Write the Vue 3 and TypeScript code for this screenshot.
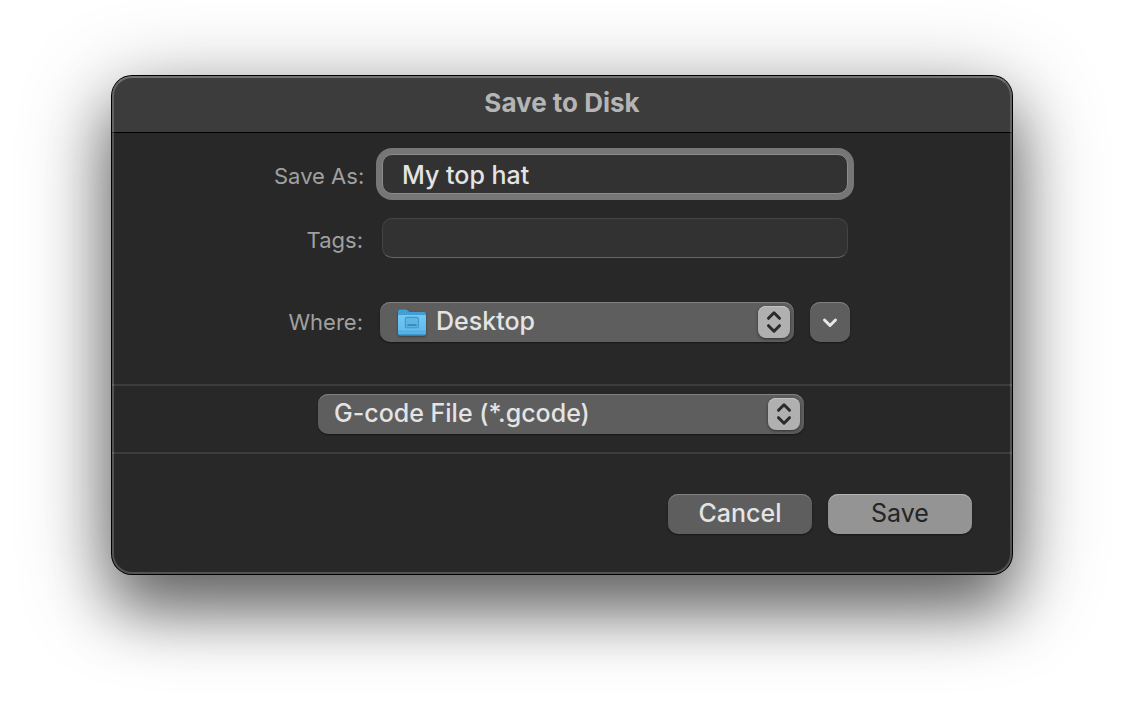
<script setup lang="ts">
import { ref } from 'vue'

const fileName = ref('My top hat')
const tags = ref('')
const location = ref('Desktop')
const format = ref('gcode')
</script>

<template>
  <main class="page">
    <form class="dialog" aria-labelledby="dialog-title" @submit.prevent>
      <header class="titlebar">
        <h1 id="dialog-title">Save to Disk</h1>
      </header>

      <div class="fields">
        <label class="label label-text" for="file-name">Save As:</label>
        <input id="file-name" v-model="fileName" class="text focused" type="text" />

        <label class="label label-text" for="tags">Tags:</label>
        <input id="tags" v-model="tags" class="text" type="text" />

        <label class="label label-where" for="location">Where:</label>
        <div class="where">
          <div class="popup popup-icon">
            <svg class="folder" viewBox="0 0 32 30" aria-hidden="true">
              <defs>
                <linearGradient id="folder-front" x1="0" y1="0" x2="0" y2="1">
                  <stop offset="0" stop-color="#74c8f3" />
                  <stop offset="0.75" stop-color="#61bbec" />
                  <stop offset="1" stop-color="#4fa9dd" />
                </linearGradient>
              </defs>
              <path d="M2 3.500Q2 1.500 4 1.500H9.500Q10.700 1.500 11.600 2.300L12.600 3.200Q13.300 3.900 14.400 3.900H28Q30 3.900 30 5.900V12H2Z" fill="#419fd6" />
              <path d="M2 7.800Q2 6.900 3 6.900H29Q30 6.900 30 7.800V25.500Q30 27.500 28 27.500H4Q2 27.500 2 25.500Z" fill="url(#folder-front)" />
              <path d="M2 23.300H30" stroke="#4ba4d8" stroke-width="0.800" />
              <path d="M2.500 26.900H29.500" stroke="#3689bd" stroke-width="1" />
              <rect x="9.400" y="9.400" width="13" height="10.400" rx="1.400" fill="#5eb5e4" stroke="#3f97cb" stroke-width="1.100" />
              <path d="M12 17.200H20" stroke="#3387bb" stroke-width="1.700" stroke-linecap="round" />
            </svg>
            <select id="location" v-model="location">
              <option value="Desktop">Desktop</option>
            </select>
            <span class="stepper" aria-hidden="true">
              <svg viewBox="0 0 32 32"><path d="M10.500 12.300 16 6.800 21.500 12.300M10.500 19.700 16 25.200 21.500 19.700" /></svg>
            </span>
          </div>
          <button class="expand" type="button" aria-label="Expand">
            <svg viewBox="0 0 40 40" aria-hidden="true"><path d="M14.500 18 20 23.500 25.500 18" /></svg>
          </button>
        </div>
      </div>

      <div class="format">
        <div class="popup popup-format">
          <select v-model="format" aria-label="File format">
            <option value="gcode">G-code File (*.gcode)</option>
          </select>
          <span class="stepper" aria-hidden="true">
            <svg viewBox="0 0 32 32"><path d="M10.500 12.300 16 6.800 21.500 12.300M10.500 19.700 16 25.200 21.500 19.700" /></svg>
          </span>
        </div>
      </div>

      <footer class="actions">
        <button class="action" type="button">Cancel</button>
        <button class="action primary" type="submit">Save</button>
      </footer>
    </form>
  </main>
</template>

<style>
body {
  margin: 0;
  background: #fff;
}
</style>

<style scoped>
* {
  box-sizing: border-box;
}

.page {
  padding: 76px 112px 148px;
  overflow: hidden;
  font-family: Inter, "Liberation Sans", sans-serif;
  font-size: 25px;
  font-weight: 500;
  color: #e4e4e4;
}

.dialog {
  position: relative;
  border-radius: 20px;
  background: #282828;
  box-shadow:
    0 0 0 1px #000,
    0 36px 60px rgba(0, 0, 0, 0.42),
    0 20px 90px rgba(0, 0, 0, 0.42);
}

.dialog::after {
  content: "";
  position: absolute;
  inset: 0;
  border: 2px solid rgba(255, 255, 255, 0.2);
  border-top-color: rgba(255, 255, 255, 0.28);
  border-radius: 20px;
  pointer-events: none;
}

.titlebar {
  display: flex;
  align-items: center;
  justify-content: center;
  height: 57px;
  padding-bottom: 3px;
  border-bottom: 1px solid #000;
  border-radius: 20px 20px 0 0;
  background: #3c3c3c;
}

h1 {
  margin: 0;
  font-size: 26px;
  line-height: 32px;
  font-weight: 700;
  color: #b5b5b5;
}

.fields {
  display: grid;
  grid-template-columns: 90px 470px;
  justify-content: center;
  align-items: center;
  column-gap: 16px;
  row-gap: 24px;
  padding: 21px 0 42px;
}

.label {
  padding-right: 1px;
  font-size: 22px;
  line-height: 28px;
  font-weight: 400;
  text-align: right;
  white-space: nowrap;
  color: #a0a0a0;
}

.label-text {
  padding-top: 4px;
}

.label-where,
.where {
  margin-top: 20px;
}

.text {
  width: 466px;
  height: 40px;
  margin: 0 2px;
  padding: 2px 19px 0;
  border: 1px solid #444;
  border-bottom-color: #666;
  border-radius: 10px;
  outline: 0;
  background: #323232;
  color: inherit;
  font: inherit;
}

.focused {
  border-color: #8c8c8c;
  box-shadow: 0 0 0 6px #767676;
}

.where {
  display: flex;
  gap: 16px;
}

.popup {
  position: relative;
  flex: 1;
  height: 40px;
}

select,
.expand,
.action {
  border: 0;
  border-radius: 10px;
  background: #5e5e5e;
  box-shadow: inset 0 1px 0 #808080, 0 1px 2px rgba(0, 0, 0, 0.45);
  color: inherit;
  font: inherit;
}

select {
  appearance: none;
  display: block;
  width: 100%;
  height: 40px;
  padding: 0 48px 2px 16px;
}

.popup-icon select {
  padding-left: 56px;
}

.folder {
  position: absolute;
  top: 6px;
  left: 16px;
  width: 32px;
  height: 30px;
  filter: drop-shadow(0 1px 1px rgba(0, 0, 0, 0.4));
}

.stepper {
  position: absolute;
  top: 4px;
  right: 4px;
  width: 32px;
  height: 32px;
  border-radius: 8px;
  background: #b0b0b0;
  box-shadow: inset 0 1px 0 #c4c4c4, 0 1px 3px rgba(0, 0, 0, 0.5);
  pointer-events: none;
}

svg {
  display: block;
}

.stepper path,
.expand path {
  fill: none;
  stroke: #2a2a2a;
  stroke-width: 3;
  stroke-linecap: round;
  stroke-linejoin: round;
}

.expand {
  width: 40px;
  height: 40px;
  padding: 0;
}

.expand path {
  stroke: #e8e8e8;
}

.format {
  display: flex;
  justify-content: center;
  padding: 8px 2px 18px 0;
  border-top: 2px solid #3d3d3d;
  border-bottom: 2px solid #3d3d3d;
}

.popup-format {
  flex: 0 0 486px;
}

.actions {
  display: flex;
  justify-content: flex-end;
  gap: 16px;
  padding: 40px;
}

.action {
  width: 144px;
  height: 40px;
  padding: 0 0 2px;
}

.primary {
  background: #949494;
  box-shadow: inset 0 1px 0 #b4b4b4, 0 1px 2px rgba(0, 0, 0, 0.45);
  color: #252525;
  font-weight: 400;
}
</style>
